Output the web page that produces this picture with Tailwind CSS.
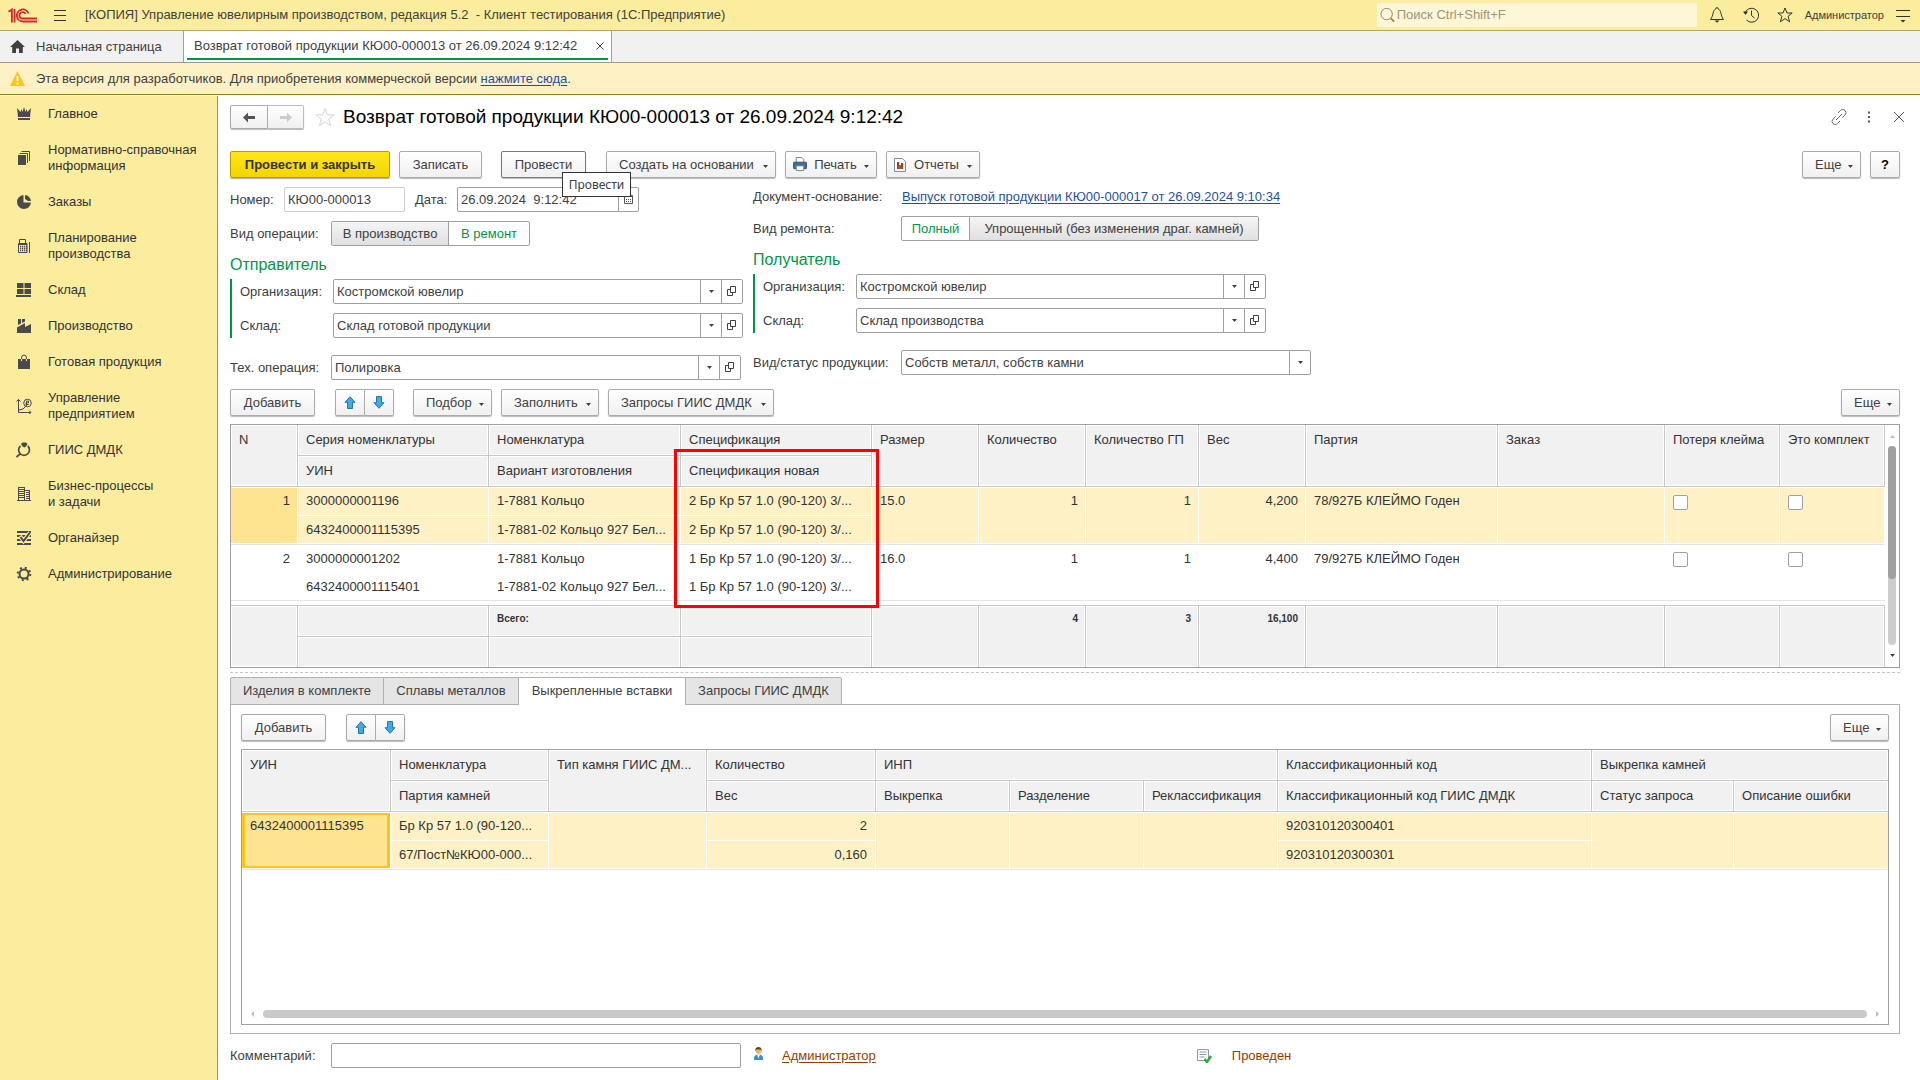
<!DOCTYPE html>
<html lang="ru">
<head>
<meta charset="utf-8">
<title>Возврат готовой продукции КЮ00-000013</title>
<script src="https://cdn.jsdelivr.net/npm/@tailwindcss/browser@4"></script>
</head>
<body class="flex min-h-screen flex-col bg-white font-['Liberation_Sans',Arial,sans-serif] text-[13px] leading-4 text-[#404040]">

<svg class="hidden" aria-hidden="true">
  <symbol id="caret" viewBox="0 0 5 3"><path d="M0 0h5L2.5 3z" fill="#404040"/></symbol>
  <symbol id="open" viewBox="0 0 10 11"><path d="M3.500 .5h5v6h-5zM3.500 3.500h-3v6h5v-3" fill="none" stroke="#404040"/></symbol>
  <symbol id="up" viewBox="0 0 12 13"><path d="M6 .7 11 6.300H8.500V12.500H3.500V6.300H1z" fill="#42a8e8" stroke="#2277aa"/></symbol>
  <symbol id="down" viewBox="0 0 12 13"><path d="M6 12.300 11 6.700H8.500V.5H3.500V6.700H1z" fill="#42a8e8" stroke="#2277aa"/></symbol>
</svg>

<!-- Title bar -->
<header class="flex h-[31px] shrink-0 items-center border-b border-[#b3a764] bg-[#fbed9e]">
  <svg class="ml-2 h-[15px] w-[29px]" viewBox="0 0 29 15" fill="none" stroke="#d9242b" stroke-width="1.800">
    <path d="M.5 3.800 3.900 1.500V14.500M6.500 14.500V1"/>
    <path d="M20.500 5.500A6 6 0 1 0 14.800 13.500H29"/>
    <path d="M17.500 6A3.200 3.200 0 1 0 14.700 10.500H29"/>
  </svg>
  <button class="ml-4 h-4 w-[14px]" aria-label="Меню"><svg class="h-4 w-[14px]" viewBox="0 0 14 16" stroke="#333" fill="none"><path d="M1 3.500h12M1 8.500h12M1 13.500h12"/></svg></button>
  <div class="ml-[18px] flex-1 whitespace-pre">[КОПИЯ] Управление ювелирным производством, редакция 5.2  - Клиент тестирования (1С:Предприятие)</div>
  <label class="flex h-6 w-80 items-center rounded-xs bg-[#fdf7d8] pl-[3px]">
    <svg class="h-4 w-4" viewBox="0 0 16 16" fill="none" stroke="#8a8566"><circle cx="7" cy="7" r="6"/><path d="m11.500 11.500 3.500 3.500" stroke-width="2"/></svg>
    <input class="ml-[2px] w-full bg-transparent placeholder-[#9b9677] outline-none" type="text" placeholder="Поиск Ctrl+Shift+F" aria-label="Поиск">
  </label>
  <button class="ml-3 h-4 w-4" aria-label="Уведомления"><svg class="h-4 w-4" viewBox="0 0 16 16" fill="none" stroke="#333"><path d="M8 .5c.8 0 1 .5 1 1.300C12.500 3 11.500 9 14.500 12.500H1.500C4.500 9 3.500 3 7 1.800 7 1 7.200.5 8 .5z"/><path d="M5.500 13.500h5L8 15.800z" fill="#333" stroke="none"/></svg></button>
  <button class="ml-[18px] h-4 w-4" aria-label="История"><svg class="h-4 w-4" viewBox="0 0 16 16" fill="none" stroke="#333"><path d="M2 6A7 7 0 1 1 3.500 13M8.500 3.500v5l3 2.500"/><path d="M0 4.500h5L2.500 8z" fill="#333" stroke="none"/></svg></button>
  <button class="ml-[18px] h-4 w-4" aria-label="Избранное"><svg class="h-4 w-4" viewBox="0 0 16 16" fill="none" stroke="#333"><path d="m8 1 2 5h5.200l-4.100 3.300 1.500 5.500L8 11.600l-4.600 3.200 1.500-5.500L.8 6H6z"/></svg></button>
  <a href="#" class="ml-3 text-[11px]">Администратор</a>
  <button class="mr-[10px] ml-3 h-4 w-[14px]" aria-label="Сервис"><svg class="h-4 w-[14px]" viewBox="0 0 14 16" stroke="#333" fill="none"><path d="M0 3.500h14M0 9.500h14"/><path d="M4.500 13h5L7 15.500z" fill="#333" stroke="none"/></svg></button>
</header>

<!-- Open windows -->
<nav class="flex h-8 shrink-0 border-b border-[#999] bg-[#f1f1f1]">
  <a href="#" class="flex w-[184px] items-center border-r border-[#a0a0a0] pl-[10px]">
    <svg class="h-[14px] w-[15px]" viewBox="0 0 15 14" fill="#404040"><path d="M7.500 0 15 7h-2.200v6H9V8.500H6V13H2.200V7H0z"/></svg>
    <span class="ml-[11px]">Начальная страница</span>
  </a>
  <div class="flex w-[428px] border-r border-[#a0a0a0] bg-white px-[3px] pb-[2px]">
    <div class="flex w-full items-center justify-between border-b-2 border-[#009646] pt-[3px] pr-1 pl-[7px]">
      <a href="#">Возврат готовой продукции КЮ00-000013 от 26.09.2024 9:12:42</a>
      <button aria-label="Закрыть вкладку"><svg class="h-2 w-2" viewBox="0 0 8 8" stroke="#404040"><path d="m.5.5 7 7m0-7-7 7"/></svg></button>
    </div>
  </div>
</nav>

<div class="mb-px flex h-8 shrink-0 items-center border-b border-[#9a7a12] bg-[#fef1c5] pl-[10px]">
  <svg class="h-[15px] w-[15px]" viewBox="0 0 15 15"><path d="M7.500 0 15 15H0z" fill="#f9c518"/><path d="M7.500 5v5M7.500 11.500v2" stroke="#fff" stroke-width="1.800"/></svg>
  <p class="ml-[11px]">Эта версия для разработчиков. Для приобретения коммерческой версии <a href="#" class="text-[#1f4fa3] underline underline-offset-2">нажмите сюда</a>.</p>
</div>

<div class="flex flex-1">
  <!-- Sections -->
  <nav class="flex w-[218px] shrink-0 flex-col border-r border-[#9a8f55] bg-[#fbec9e] text-[#333]">
    <a href="#" class="flex items-center gap-4 py-[10px] pl-4"><svg class="h-4 w-4" viewBox="0 0 16 16" fill="#4a4a4a"><path d="M1 2l3.500 4L5.500 3l1 3L8 1l1.500 5 1-3 1 3L15 2l-1 9H2zM2 12h12v2H2z"/></svg><span>Главное</span></a>
    <a href="#" class="flex items-center gap-4 py-[10px] pl-4"><svg class="h-4 w-4" viewBox="0 0 16 16" fill="#4a4a4a"><path d="M2 5h8v10H2z"/><path d="M3.500 3.500h8V13M5.500 1.500h8V11" fill="none" stroke="#4a4a4a"/></svg><span>Нормативно-справочная<br>информация</span></a>
    <a href="#" class="flex items-center gap-4 py-[10px] pl-4"><svg class="h-4 w-4" viewBox="0 0 16 16" fill="#4a4a4a"><path d="M7.500 1v7.500H15A7 7 0 1 1 7.500 1z"/><path d="M9 1a6.500 6.500 0 0 1 6 6H12L9 5z"/></svg><span>Заказы</span></a>
    <a href="#" class="flex items-center gap-4 py-[10px] pl-4"><svg class="h-4 w-4" viewBox="0 0 16 16" fill="none" stroke="#4a4a4a"><path d="M3.500 6V1.500h6V6M2.500 5.500h8.500v9H2.500zM13.500 4v11"/><path d="M3 6h8" stroke-width="2"/><path d="M4 8.500h7M4 10.500h7M4 12.500h7" stroke-width="1.500" stroke-dasharray="1.200 .8"/></svg><span>Планирование<br>производства</span></a>
    <a href="#" class="flex items-center gap-4 py-[10px] pl-4"><svg class="h-4 w-4" viewBox="0 0 16 16" fill="#4a4a4a"><path d="M1 1h6.500v5H1zM8.500 1H15v5H8.500zM1 7h6.500v5H1zM8.500 7H15v5H8.500zM0 13h15v2H0z"/></svg><span>Склад</span></a>
    <a href="#" class="flex items-center gap-4 py-[10px] pl-4"><svg class="h-4 w-4" viewBox="0 0 16 16" fill="#4a4a4a"><path d="M1 15V9.500L9 5v4l6-3v9zM2 1h3v4.500L2 7zM6 1h3v2.500L6 5z"/></svg><span>Производство</span></a>
    <a href="#" class="flex items-center gap-4 py-[10px] pl-4"><svg class="h-4 w-4" viewBox="0 0 16 16" fill="#4a4a4a"><path d="M2 5h12v10H2z"/><path d="M5.500 5V4a2.500 3 0 0 1 5 0v1" fill="none" stroke="#4a4a4a"/><path d="M5.500 5v2M10.500 5v2" stroke="#fbec9e"/></svg><span>Готовая продукция</span></a>
    <a href="#" class="flex items-center gap-4 py-[10px] pl-4"><svg class="h-4 w-4" viewBox="0 0 16 16" fill="none" stroke="#4a4a4a"><path d="M2.500 1v13.500H15M.5 3.500l2-2 2 2M13 12.500l2 2-2 1.500M3 12l4-1 3-3"/><circle cx="11.500" cy="5" r="3.800"/><path d="M10.500 8V3h2v2h-3M9.500 6.500h3"/></svg><span>Управление<br>предприятием</span></a>
    <a href="#" class="flex items-center gap-4 py-[10px] pl-4"><svg class="h-4 w-4" viewBox="0 0 16 16" fill="#4a4a4a"><path d="M5 2l1.500-1.500h3.500L11.500 2 10 4.500 8.300 5.500 6.500 4.500z"/><path d="M4.500 4a5.200 5.200 0 0 0-.5 7.500 5.300 5.300 0 0 0 8 0 5.200 5.200 0 0 0-.2-7.500M4.500 11.500.5 15" fill="none" stroke="#4a4a4a" stroke-width="1.700"/></svg><span>ГИИС ДМДК</span></a>
    <a href="#" class="flex items-center gap-4 py-[10px] pl-4"><svg class="h-4 w-4" viewBox="0 0 16 16" fill="none" stroke="#4a4a4a"><path d="M2.500 1v14M8.500 1v14M13.500 4v11M1 14.500h14M2 1.500h7M3 3.500h5M3 5.500h5M3 7.500h5M3 9.500h5M3 11.500h5M9 4.500h4M10 6.500h3M10 8.500h3M10 10.500h3M10 12.500h3"/></svg><span>Бизнес-процессы<br>и задачи</span></a>
    <a href="#" class="flex items-center gap-4 py-[10px] pl-4"><svg class="h-4 w-4" viewBox="0 0 16 16" fill="none" stroke="#4a4a4a" stroke-width="2"><path d="M1 2h14M1 6h14M1 10h14M1 14h14"/><path d="m4 6 3.500 5L14 2.500" stroke="#fbec9e" stroke-width="4"/><path d="m4.500 7 3 4L14 2.500"/></svg><span>Органайзер</span></a>
    <a href="#" class="flex items-center gap-4 py-[10px] pl-4"><svg class="h-4 w-4" viewBox="0 0 16 16" fill="none" stroke="#4a4a4a"><circle cx="8" cy="8" r="4.500" stroke-width="2"/><circle cx="8" cy="8" r="6.300" stroke-width="2" stroke-dasharray="2 2.950"/></svg><span>Администрирование</span></a>
  </nav>

  <!-- Document form -->
  <main class="flex min-w-0 flex-1 flex-col pt-[9px] pr-5 pb-3 pl-3">
    <div class="flex h-6 items-center">
      <div class="flex">
        <button class="flex h-6 w-[38px] items-center justify-center rounded-l-xs border border-[#aaa] bg-linear-to-b from-white to-[#f0f0f0] shadow-[0_1px_1px_#bbb]" aria-label="Назад"><svg class="h-[11px] w-3" viewBox="0 0 12 11" fill="#555"><path d="M0 5.500 5 .5v3.500h7v3H5v3.500z"/></svg></button>
        <button class="flex h-6 w-9 items-center justify-center rounded-r-xs border border-l-0 border-[#bbb] bg-linear-to-b from-white to-[#f0f0f0] shadow-[0_1px_1px_#bbb]" aria-label="Вперед"><svg class="h-[11px] w-3" viewBox="0 0 12 11" fill="#ccc"><path d="M12 5.500 7 .5v3.500H0v3h7v3.500z"/></svg></button>
      </div>
      <button class="ml-[11px]" aria-label="В избранное"><svg class="h-5 w-5" viewBox="0 0 20 20" fill="none" stroke="#d5d5d5"><path d="m10 1.500 2.300 6.200 6.700.3-5.200 4.200 1.700 6.500L10 15l-5.500 3.700 1.700-6.500L1 8l6.700-.3z"/></svg></button>
      <h1 class="ml-2 flex-1 text-[19px] leading-6 text-black">Возврат готовой продукции КЮ00-000013 от 26.09.2024 9:12:42</h1>
      <button aria-label="Ссылка"><svg class="h-4 w-4" viewBox="0 0 16 16" fill="none" stroke="#666"><path d="m7 4 2.500-2.500a3 3 0 0 1 4.500 0 3 3 0 0 1 0 4.300L11.500 8.500M9 12l-2.500 2.500a3 3 0 0 1-4.500 0 3 3 0 0 1 0-4.300L4.500 7.500M5 11l6-6"/></svg></button>
      <button class="ml-4" aria-label="Действия"><svg class="h-3 w-3" viewBox="0 0 12 12" fill="#555"><path d="M5 0.500h2v2h-2zM5 5h2v2H5zM5 9.500h2v2H5z"/></svg></button>
      <button class="mr-[-6px] ml-[17px]" aria-label="Закрыть"><svg class="h-[14px] w-[14px]" viewBox="0 0 14 14" stroke="#555"><path d="m2 2 10 10M12 2 2 12"/></svg></button>
    </div>

    <div class="mt-[22px] flex h-[27px]">
      <button class="w-40 rounded-xs border border-[#b59f00] bg-linear-to-b from-[#ffe71a] to-[#f2d500] font-bold text-[#333] shadow-[0_1px_1px_#aaa]">Провести и закрыть</button>
      <button class="ml-[9px] w-[83px] rounded-xs border border-[#aaa] bg-linear-to-b from-white to-[#f0f0f0] shadow-[0_1px_1px_#bbb]">Записать</button>
      <div class="relative ml-[19px] flex">
        <button class="w-[85px] rounded-xs border border-[#777] bg-linear-to-b from-white to-[#f0f0f0] shadow-[0_1px_1px_#bbb]">Провести</button>
        <div role="tooltip" class="absolute top-[21px] left-[61px] z-10 h-[25px] w-[69px] border border-[#333] bg-white text-center font-['Noto_Sans',sans-serif] text-[12px] leading-6">Провести</div>
      </div>
      <button class="ml-5 flex w-[170px] items-center justify-between rounded-xs border border-[#aaa] bg-linear-to-b from-white to-[#f0f0f0] pr-[7px] pl-3 shadow-[0_1px_1px_#bbb]">Создать на основании<svg class="mt-1 h-[3px] w-[5px]"><use href="#caret"/></svg></button>
      <button class="ml-[9px] flex w-[92px] items-center justify-between rounded-xs border border-[#aaa] bg-linear-to-b from-white to-[#f0f0f0] px-[7px] shadow-[0_1px_1px_#bbb]"><svg class="h-[15px] w-[14px]" viewBox="0 0 15 16"><path d="M3.500 6V.5h6l2 2V6" fill="#fff" stroke="#6c8799"/><rect x=".5" y="5.500" width="14" height="7" rx="1" fill="#3e6f9a" stroke="#2c4f70"/><path d="M3.500 9.500h8v5h-8z" fill="#fff" stroke="#6c8799"/></svg>Печать<svg class="mt-1 h-[3px] w-[5px]"><use href="#caret"/></svg></button>
      <button class="ml-[9px] flex w-[94px] items-center justify-between rounded-xs border border-[#aaa] bg-linear-to-b from-white to-[#f0f0f0] px-[7px] shadow-[0_1px_1px_#bbb]"><svg class="h-[14px] w-3" viewBox="0 0 12 14"><path d="M.5.5h8l3 3v10H.5z" fill="#fff" stroke="#7d8fa0"/><path d="M3 4h2v7H3z" fill="#d22"/><path d="M5 7h2v4H5z" fill="#2a2"/><path d="M7 5h2v6H7z" fill="#d22"/></svg>Отчеты<svg class="mt-1 h-[3px] w-[5px]"><use href="#caret"/></svg></button>
      <button class="ml-auto flex w-[59px] items-center justify-between rounded-xs border border-[#aaa] bg-linear-to-b from-white to-[#f0f0f0] pr-[7px] pl-3 shadow-[0_1px_1px_#bbb]">Еще<svg class="mt-1 h-[3px] w-[5px]"><use href="#caret"/></svg></button>
      <button class="ml-[9px] w-[30px] rounded-xs border border-[#aaa] bg-linear-to-b from-white to-[#f0f0f0] font-bold text-black shadow-[0_1px_1px_#bbb]" aria-label="Справка">?</button>
    </div>

    <form class="mt-[9px] grid grid-cols-[513px_1fr] gap-x-[10px]">
      <div class="flex flex-col">
        <div class="flex h-[25px] items-center">
          <label for="number" class="w-[54px]">Номер:</label>
          <input id="number" type="text" value="КЮ00-000013" class="h-full w-[121px] rounded-xs border border-[#ccc] px-[3px]">
          <label for="date" class="ml-[10px] w-[42px]">Дата:</label>
          <div class="flex h-full w-[182px] rounded-xs border border-[#a0a0a0]">
            <input id="date" type="text" value="26.09.2024  9:12:42" class="w-40 px-[3px]">
            <button type="button" class="flex flex-1 items-center justify-center border-l border-[#a0a0a0]" aria-label="Календарь"><svg class="h-[9px] w-[9px]" viewBox="0 0 9 9" fill="none" stroke="#555"><path d="M.5.5h8v8h-8zM1 1.500h7"/><path d="M2 4.500h6M2 6.500h6" stroke-dasharray="1 1"/></svg></button>
          </div>
        </div>
        <fieldset class="mt-[9px] flex h-[25px] items-center">
          <span class="w-[101px]">Вид операции:</span>
          <div class="relative flex h-[25px] overflow-hidden rounded-xs border border-[#a0a0a0]">
            <label class="flex w-[117px] items-center justify-center border-r border-[#a0a0a0] bg-linear-to-b from-[#f5f5f5] to-[#e0e0e0]"><input type="radio" name="op" class="sr-only">В производство</label>
            <label class="flex w-20 items-center justify-center text-[#009646]"><input type="radio" name="op" checked class="sr-only">В ремонт</label>
          </div>
        </fieldset>
        <h2 class="mt-[9px] text-[16px] leading-5 text-[#009646]">Отправитель</h2>
        <div class="mt-1 flex flex-col gap-[9px] border-l-2 border-[#009646] pl-2">
          <div class="flex h-[25px] items-center">
            <label for="org1" class="w-[93px]">Организация:</label>
            <div class="flex h-full w-[410px] rounded-xs border border-[#a0a0a0]">
              <select id="org1" class="flex-1 appearance-none px-[3px]"><option>Костромской ювелир</option></select>
              <span class="flex w-[21px] items-center justify-center border-l border-[#a0a0a0]"><svg class="h-[3px] w-[5px]"><use href="#caret"/></svg></span>
              <button type="button" class="flex w-[21px] items-center justify-center border-l border-[#a0a0a0]" aria-label="Открыть"><svg class="h-[11px] w-[10px]"><use href="#open"/></svg></button>
            </div>
          </div>
          <div class="flex h-[25px] items-center">
            <label for="wh1" class="w-[93px]">Склад:</label>
            <div class="flex h-full w-[410px] rounded-xs border border-[#a0a0a0]">
              <select id="wh1" class="flex-1 appearance-none px-[3px]"><option>Склад готовой продукции</option></select>
              <span class="flex w-[21px] items-center justify-center border-l border-[#a0a0a0]"><svg class="h-[3px] w-[5px]"><use href="#caret"/></svg></span>
              <button type="button" class="flex w-[21px] items-center justify-center border-l border-[#a0a0a0]" aria-label="Открыть"><svg class="h-[11px] w-[10px]"><use href="#open"/></svg></button>
            </div>
          </div>
        </div>
        <div class="mt-[17px] flex h-[25px] items-center">
          <label for="tech" class="w-[101px]">Тех. операция:</label>
          <div class="flex h-full w-[410px] rounded-xs border border-[#a0a0a0]">
            <select id="tech" class="flex-1 appearance-none px-[3px]"><option>Полировка</option></select>
            <span class="flex w-[21px] items-center justify-center border-l border-[#a0a0a0]"><svg class="h-[3px] w-[5px]"><use href="#caret"/></svg></span>
            <button type="button" class="flex w-[21px] items-center justify-center border-l border-[#a0a0a0]" aria-label="Открыть"><svg class="h-[11px] w-[10px]"><use href="#open"/></svg></button>
          </div>
        </div>
      </div>
      <div class="flex flex-col">
        <div class="flex h-5 items-center">
          <span class="w-[149px]">Документ-основание:</span>
          <a href="#" class="text-[#1f4fa3] underline underline-offset-2">Выпуск готовой продукции КЮ00-000017 от 26.09.2024 9:10:34</a>
        </div>
        <fieldset class="mt-[9px] flex h-[25px] items-center">
          <span class="w-[148px]">Вид ремонта:</span>
          <div class="relative flex h-[25px] overflow-hidden rounded-xs border border-[#a0a0a0]">
            <label class="flex w-[68px] items-center justify-center border-r border-[#a0a0a0] text-[#009646]"><input type="radio" name="repair" checked class="sr-only">Полный</label>
            <label class="flex w-[288px] items-center justify-center bg-linear-to-b from-[#f5f5f5] to-[#e0e0e0]"><input type="radio" name="repair" class="sr-only">Упрощенный (без изменения драг. камней)</label>
          </div>
        </fieldset>
        <h2 class="mt-[9px] text-[16px] leading-5 text-[#009646]">Получатель</h2>
        <div class="mt-1 flex flex-col gap-[9px] border-l-2 border-[#009646] pl-2">
          <div class="flex h-[25px] items-center">
            <label for="org2" class="w-[93px]">Организация:</label>
            <div class="flex h-full w-[410px] rounded-xs border border-[#a0a0a0]">
              <select id="org2" class="flex-1 appearance-none px-[3px]"><option>Костромской ювелир</option></select>
              <span class="flex w-[21px] items-center justify-center border-l border-[#a0a0a0]"><svg class="h-[3px] w-[5px]"><use href="#caret"/></svg></span>
              <button type="button" class="flex w-[21px] items-center justify-center border-l border-[#a0a0a0]" aria-label="Открыть"><svg class="h-[11px] w-[10px]"><use href="#open"/></svg></button>
            </div>
          </div>
          <div class="flex h-[25px] items-center">
            <label for="wh2" class="w-[93px]">Склад:</label>
            <div class="flex h-full w-[410px] rounded-xs border border-[#a0a0a0]">
              <select id="wh2" class="flex-1 appearance-none px-[3px]"><option>Склад производства</option></select>
              <span class="flex w-[21px] items-center justify-center border-l border-[#a0a0a0]"><svg class="h-[3px] w-[5px]"><use href="#caret"/></svg></span>
              <button type="button" class="flex w-[21px] items-center justify-center border-l border-[#a0a0a0]" aria-label="Открыть"><svg class="h-[11px] w-[10px]"><use href="#open"/></svg></button>
            </div>
          </div>
        </div>
        <div class="mt-[17px] flex h-[25px] items-center">
          <label for="kind" class="w-[148px]">Вид/статус продукции:</label>
          <div class="flex h-full w-[410px] rounded-xs border border-[#a0a0a0]">
            <select id="kind" class="flex-1 appearance-none px-[3px]"><option>Собств металл, собств камни</option></select>
            <span class="flex w-[21px] items-center justify-center border-l border-[#a0a0a0]"><svg class="h-[3px] w-[5px]"><use href="#caret"/></svg></span>
          </div>
        </div>
      </div>
    </form>

    <div class="mt-[9px] flex h-[27px]">
      <button class="w-[85px] rounded-xs border border-[#aaa] bg-linear-to-b from-white to-[#f0f0f0] shadow-[0_1px_1px_#bbb]">Добавить</button>
      <button class="ml-5 flex w-[30px] items-center justify-center rounded-l-xs border border-[#aaa] bg-linear-to-b from-white to-[#f0f0f0] shadow-[0_1px_1px_#bbb]" aria-label="Вверх"><svg class="h-[13px] w-3"><use href="#up"/></svg></button>
      <button class="flex w-[29px] items-center justify-center rounded-r-xs border border-l-0 border-[#aaa] bg-linear-to-b from-white to-[#f0f0f0] shadow-[0_1px_1px_#bbb]" aria-label="Вниз"><svg class="h-[13px] w-3"><use href="#down"/></svg></button>
      <button class="ml-[19px] flex w-[79px] items-center justify-between rounded-xs border border-[#aaa] bg-linear-to-b from-white to-[#f0f0f0] pr-[7px] pl-3 shadow-[0_1px_1px_#bbb]">Подбор<svg class="mt-1 h-[3px] w-[5px]"><use href="#caret"/></svg></button>
      <button class="ml-[9px] flex w-[98px] items-center justify-between rounded-xs border border-[#aaa] bg-linear-to-b from-white to-[#f0f0f0] pr-[7px] pl-3 shadow-[0_1px_1px_#bbb]">Заполнить<svg class="mt-1 h-[3px] w-[5px]"><use href="#caret"/></svg></button>
      <button class="ml-[9px] flex w-[166px] items-center justify-between rounded-xs border border-[#aaa] bg-linear-to-b from-white to-[#f0f0f0] pr-[7px] pl-3 shadow-[0_1px_1px_#bbb]">Запросы ГИИС ДМДК<svg class="mt-1 h-[3px] w-[5px]"><use href="#caret"/></svg></button>
      <button class="ml-auto flex w-[59px] items-center justify-between rounded-xs border border-[#aaa] bg-linear-to-b from-white to-[#f0f0f0] pr-[7px] pl-3 shadow-[0_1px_1px_#bbb]">Еще<svg class="mt-1 h-[3px] w-[5px]"><use href="#caret"/></svg></button>
    </div>

    <!-- Goods -->
    <div class="relative mt-2 flex border border-[#a0a0a0] text-[#333]">
      <table class="min-w-0 flex-1 table-fixed border-separate border-spacing-0 text-left [&_td]:truncate [&_td]:px-2 [&_td]:py-0 [&_th]:truncate [&_th]:border-r [&_th]:border-b [&_th]:border-[#c8c8c8] [&_th]:bg-[#f1f1f1] [&_th]:px-2 [&_th]:font-normal [&_th]:shadow-[inset_0_0_0_1px_#fff]">
        <colgroup><col class="w-[67px]"><col class="w-[191px]"><col class="w-[192px]"><col class="w-[191px]"><col class="w-[107px]"><col class="w-[107px]"><col class="w-[113px]"><col class="w-[107px]"><col class="w-[192px]"><col><col class="w-[115px]"><col class="w-[105px]"></colgroup>
        <thead>
          <tr class="h-[31px]">
            <th rowspan="2" class="pt-[7px] align-top">N</th><th>Серия номенклатуры</th><th>Номенклатура</th><th>Спецификация</th>
            <th rowspan="2" class="pt-[7px] align-top">Размер</th><th rowspan="2" class="pt-[7px] align-top">Количество</th><th rowspan="2" class="pt-[7px] align-top">Количество ГП</th><th rowspan="2" class="pt-[7px] align-top">Вес</th><th rowspan="2" class="pt-[7px] align-top">Партия</th><th rowspan="2" class="pt-[7px] align-top">Заказ</th><th rowspan="2" class="pt-[7px] align-top">Потеря клейма</th><th rowspan="2" class="pt-[7px] align-top">Это комплект</th>
          </tr>
          <tr class="h-[31px]"><th>УИН</th><th>Вариант изготовления</th><th>Спецификация новая</th></tr>
        </thead>
        <tbody class="[&_td]:border-r [&_td]:border-b [&_td]:border-white [&_td]:bg-[#fef1c5] [&_td.text-right]:pr-[7px]">
          <tr class="h-[29px]">
            <td rowspan="2" class="border-b-[#e4e4e4]! bg-[#fee391]! pt-[6px]! text-right align-top shadow-[inset_0_1px_#fff,inset_0_-1px_#fff]">1</td>
            <td class="shadow-[inset_0_1px_#fff]">3000000001196</td><td class="shadow-[inset_0_1px_#fff]">1-7881 Кольцо</td><td class="shadow-[inset_0_1px_#fff]">2 Бр Кр 57 1.0 (90-120) 3/...</td>
            <td rowspan="2" class="border-b-[#e4e4e4]! pt-[6px]! align-top shadow-[inset_0_1px_#fff,inset_0_-1px_#fff]">15.0</td>
            <td rowspan="2" class="border-b-[#e4e4e4]! pt-[6px]! text-right align-top shadow-[inset_0_1px_#fff,inset_0_-1px_#fff]">1</td>
            <td rowspan="2" class="border-b-[#e4e4e4]! pt-[6px]! text-right align-top shadow-[inset_0_1px_#fff,inset_0_-1px_#fff]">1</td>
            <td rowspan="2" class="border-b-[#e4e4e4]! pt-[6px]! text-right align-top shadow-[inset_0_1px_#fff,inset_0_-1px_#fff]">4,200</td>
            <td rowspan="2" class="border-b-[#e4e4e4]! pt-[6px]! align-top shadow-[inset_0_1px_#fff,inset_0_-1px_#fff]">78/927Б КЛЕЙМО Годен</td>
            <td rowspan="2" class="border-b-[#e4e4e4]! shadow-[inset_0_1px_#fff,inset_0_-1px_#fff]"></td>
            <td rowspan="2" class="border-b-[#e4e4e4]! pt-2! align-top shadow-[inset_0_1px_#fff,inset_0_-1px_#fff]"><input type="checkbox" aria-label="Потеря клейма" class="block h-[15px] w-[15px] appearance-none rounded-xs border border-[#a0a0a0] bg-white"></td>
            <td rowspan="2" class="border-b-[#e4e4e4]! pt-2! align-top shadow-[inset_0_1px_#fff,inset_0_-1px_#fff]"><input type="checkbox" aria-label="Это комплект" class="block h-[15px] w-[15px] appearance-none rounded-xs border border-[#a0a0a0] bg-white"></td>
          </tr>
          <tr class="h-[29px]"><td class="border-b-[#e4e4e4]! shadow-[inset_0_-1px_#fff]">6432400001115395</td><td class="border-b-[#e4e4e4]! shadow-[inset_0_-1px_#fff]">1-7881-02 Кольцо 927 Бел...</td><td class="border-b-[#e4e4e4]! shadow-[inset_0_-1px_#fff]">2 Бр Кр 57 1.0 (90-120) 3/...</td></tr>
        </tbody>
        <tbody>
          <tr class="h-7">
            <td rowspan="2" class="border-b border-[#e4e4e4] pt-[6px]! text-right align-top">2</td>
            <td>3000000001202</td><td>1-7881 Кольцо</td><td>1 Бр Кр 57 1.0 (90-120) 3/...</td>
            <td rowspan="2" class="border-b border-[#e4e4e4] pt-[6px]! align-top">16.0</td>
            <td rowspan="2" class="border-b border-[#e4e4e4] pt-[6px]! text-right align-top">1</td>
            <td rowspan="2" class="border-b border-[#e4e4e4] pt-[6px]! text-right align-top">1</td>
            <td rowspan="2" class="border-b border-[#e4e4e4] pt-[6px]! text-right align-top">4,400</td>
            <td rowspan="2" class="border-b border-[#e4e4e4] pt-[6px]! align-top">79/927Б КЛЕЙМО Годен</td>
            <td rowspan="2" class="border-b border-[#e4e4e4]"></td>
            <td rowspan="2" class="border-b border-[#e4e4e4] pt-[7px]! align-top"><input type="checkbox" aria-label="Потеря клейма" class="block h-[15px] w-[15px] appearance-none rounded-xs border border-[#a0a0a0] bg-white"></td>
            <td rowspan="2" class="border-b border-[#e4e4e4] pt-[7px]! align-top"><input type="checkbox" aria-label="Это комплект" class="block h-[15px] w-[15px] appearance-none rounded-xs border border-[#a0a0a0] bg-white"></td>
          </tr>
          <tr class="h-7"><td class="border-b border-[#e4e4e4]">6432400001115401</td><td class="border-b border-[#e4e4e4]">1-7881-02 Кольцо 927 Бел...</td><td class="border-b border-[#e4e4e4]">1 Бр Кр 57 1.0 (90-120) 3/...</td></tr>
          <tr class="h-1"><td colspan="12" class="h-1 leading-none"></td></tr>
        </tbody>
        <tfoot class="text-[10px] font-bold [&_td]:border-t [&_td]:border-r [&_td]:border-[#c8c8c8] [&_td]:bg-[#f1f1f1] [&_td]:shadow-[inset_0_0_0_1px_#fff] [&_td.text-right]:pr-[7px]">
          <tr class="h-[31px]"><td rowspan="2"></td><td></td><td class="pt-[5px]! align-top">Всего:</td><td></td><td rowspan="2"></td><td rowspan="2" class="pt-[5px]! text-right align-top">4</td><td rowspan="2" class="pt-[5px]! text-right align-top">3</td><td rowspan="2" class="pt-[5px]! text-right align-top">16,100</td><td rowspan="2"></td><td rowspan="2"></td><td rowspan="2"></td><td rowspan="2"></td></tr>
          <tr class="h-[31px]"><td></td><td></td><td></td></tr>
        </tfoot>
      </table>
      <div class="flex w-[14px] flex-col items-center py-[10px]">
        <svg class="h-[3px] w-[5px]" viewBox="0 0 5 3"><path d="M0 3h5L2.500 0z" fill="#bbb"/></svg>
        <div class="mt-2 w-2 flex-1 rounded-full bg-[#cdcdcd]"><div class="h-2/3 rounded-full bg-[#a0a0a0]"></div></div>
        <svg class="mt-[9px] h-[3px] w-[5px]"><use href="#caret"/></svg>
      </div>
      <div class="pointer-events-none absolute top-6 left-[443px] h-[159px] w-[205px] border-3 border-[#f00]"></div>
    </div>

    <div class="mt-1 border-t border-dashed border-[#c4c4c4]"></div>

    <!-- Detail tabs -->
    <div role="tablist" class="z-1 mt-1 -mb-px flex h-7 [&>button]:border [&>button]:border-[#b0b0b0]">
      <button role="tab" class="w-[154px] rounded-tl-xs bg-[#e5e5e5]">Изделия в комплекте</button>
      <button role="tab" class="w-[135px] border-l-0! bg-[#e5e5e5]">Сплавы металлов</button>
      <button role="tab" aria-selected="true" class="w-[166px] border-x-0! border-b-white! bg-white">Выкрепленные вставки</button>
      <button role="tab" class="w-[157px] rounded-tr-xs bg-[#e5e5e5]">Запросы ГИИС ДМДК</button>
    </div>
    <section class="flex flex-1 flex-col border border-[#b0b0b0] px-[10px] pt-[9px] pb-2">
      <div class="flex h-[27px]">
        <button class="w-[85px] rounded-xs border border-[#aaa] bg-linear-to-b from-white to-[#f0f0f0] shadow-[0_1px_1px_#bbb]">Добавить</button>
        <button class="ml-5 flex w-[30px] items-center justify-center rounded-l-xs border border-[#aaa] bg-linear-to-b from-white to-[#f0f0f0] shadow-[0_1px_1px_#bbb]" aria-label="Вверх"><svg class="h-[13px] w-3"><use href="#up"/></svg></button>
        <button class="flex w-[29px] items-center justify-center rounded-r-xs border border-l-0 border-[#aaa] bg-linear-to-b from-white to-[#f0f0f0] shadow-[0_1px_1px_#bbb]" aria-label="Вниз"><svg class="h-[13px] w-3"><use href="#down"/></svg></button>
        <button class="ml-auto flex w-[59px] items-center justify-between rounded-xs border border-[#aaa] bg-linear-to-b from-white to-[#f0f0f0] pr-[7px] pl-3 shadow-[0_1px_1px_#bbb]">Еще<svg class="mt-1 h-[3px] w-[5px]"><use href="#caret"/></svg></button>
      </div>
      <div class="mt-2 flex flex-1 flex-col border border-[#a0a0a0] text-[#333]">
        <table class="w-full table-fixed border-separate border-spacing-0 text-left [&_td]:truncate [&_td]:border-r [&_td]:border-b [&_td]:border-white [&_td]:bg-[#fef1c5] [&_td]:px-2 [&_th]:truncate [&_th]:border-r [&_th]:border-b [&_th]:border-[#c8c8c8] [&_th]:bg-[#f1f1f1] [&_th]:px-2 [&_th]:font-normal [&_th]:shadow-[inset_0_0_0_1px_#fff]">
          <colgroup><col class="w-[149px]"><col class="w-[158px]"><col class="w-[158px]"><col class="w-[169px]"><col class="w-[134px]"><col class="w-[134px]"><col class="w-[134px]"><col class="w-[314px]"><col class="w-[142px]"><col></colgroup>
          <thead>
            <tr class="h-[31px]"><th rowspan="2" class="pt-[7px] align-top">УИН</th><th>Номенклатура</th><th rowspan="2" class="pt-[7px] align-top">Тип камня ГИИС ДМ...</th><th>Количество</th><th colspan="3">ИНП</th><th>Классификационный код</th><th colspan="2" class="border-r-0!">Выкрепка камней</th></tr>
            <tr class="h-[31px]"><th>Партия камней</th><th>Вес</th><th>Выкрепка</th><th>Разделение</th><th>Реклассификация</th><th>Классификационный код ГИИС ДМДК</th><th>Статус запроса</th><th class="border-r-0!">Описание ошибки</th></tr>
          </thead>
          <tbody>
            <tr class="h-[29px]">
              <td rowspan="2" class="border-b-[#e4e4e4]! bg-[#fee391]! pt-[6px] align-top shadow-[inset_0_1px_#fff,inset_0_-1px_#fff,inset_0_0_0_3px_#f9c518]">6432400001115395</td>
              <td class="shadow-[inset_0_1px_#fff]">Бр Кр 57 1.0 (90-120...</td>
              <td rowspan="2" class="border-b-[#e4e4e4]! shadow-[inset_0_1px_#fff,inset_0_-1px_#fff]"></td>
              <td class="text-right shadow-[inset_0_1px_#fff]">2</td>
              <td rowspan="2" class="border-b-[#e4e4e4]! shadow-[inset_0_1px_#fff,inset_0_-1px_#fff]"></td><td rowspan="2" class="border-b-[#e4e4e4]! shadow-[inset_0_1px_#fff,inset_0_-1px_#fff]"></td><td rowspan="2" class="border-b-[#e4e4e4]! shadow-[inset_0_1px_#fff,inset_0_-1px_#fff]"></td>
              <td class="shadow-[inset_0_1px_#fff]">920310120300401</td>
              <td rowspan="2" class="border-b-[#e4e4e4]! shadow-[inset_0_1px_#fff,inset_0_-1px_#fff]"></td><td rowspan="2" class="border-r-0! border-b-[#e4e4e4]! shadow-[inset_0_1px_#fff,inset_0_-1px_#fff]"></td>
            </tr>
            <tr class="h-[29px]"><td class="border-b-[#e4e4e4]! shadow-[inset_0_-1px_#fff]">67/Пост№КЮ00-000...</td><td class="border-b-[#e4e4e4]! text-right shadow-[inset_0_-1px_#fff]">0,160</td><td class="border-b-[#e4e4e4]! shadow-[inset_0_-1px_#fff]">920310120300301</td></tr>
          </tbody>
        </table>
        <div class="mt-auto mb-[6px] flex items-center px-[9px]">
          <svg class="h-[6px] w-[3px]" viewBox="0 0 3 6"><path d="M3 0v6L0 3z" fill="#bbb"/></svg>
          <div class="mx-[9px] h-2 flex-1 rounded-full bg-[#cacaca]"></div>
          <svg class="h-[6px] w-[3px]" viewBox="0 0 3 6"><path d="M0 0v6l3-3z" fill="#bbb"/></svg>
        </div>
      </div>
    </section>

    <footer class="mt-[9px] flex h-[25px] items-center">
      <label for="comment" class="w-[101px]">Комментарий:</label>
      <input id="comment" type="text" class="h-full w-[410px] rounded-xs border border-[#a0a0a0] px-[3px]">
      <svg class="mb-1 ml-3 h-[13px] w-[11px]" viewBox="0 0 11 13"><path d="M1 13c-.5-4 1.500-5.500 4.500-5.500S10.500 9 10 13z" fill="#3d8fc6"/><path d="m4 7.500 1.500 4L7 7.500z" fill="#fff"/><circle cx="5.500" cy="4" r="2.800" fill="#f0b060"/><path d="M2.300 4C2 1 3.500 0 5.500 0S9 1 8.700 4L7.500 2.500h-4z" fill="#5a4526"/></svg>
      <a href="#" class="ml-[18px] text-[#963c00] underline underline-offset-2">Администратор</a>
      <svg class="ml-80 h-[14px] w-4" viewBox="0 0 16 14"><path d="M1.500.5h11v11h-11z" fill="#fff" stroke="#8899a8"/><path d="M3.500 3h7M3.500 5.500h7M3.500 8h5" stroke="#8899a8"/><path d="m8.500 10 2.500 3 4-6" fill="none" stroke="#2bab2f" stroke-width="2.400"/></svg>
      <span class="ml-5 text-[#963c00]">Проведен</span>
    </footer>
  </main>
</div>
</body>
</html>
